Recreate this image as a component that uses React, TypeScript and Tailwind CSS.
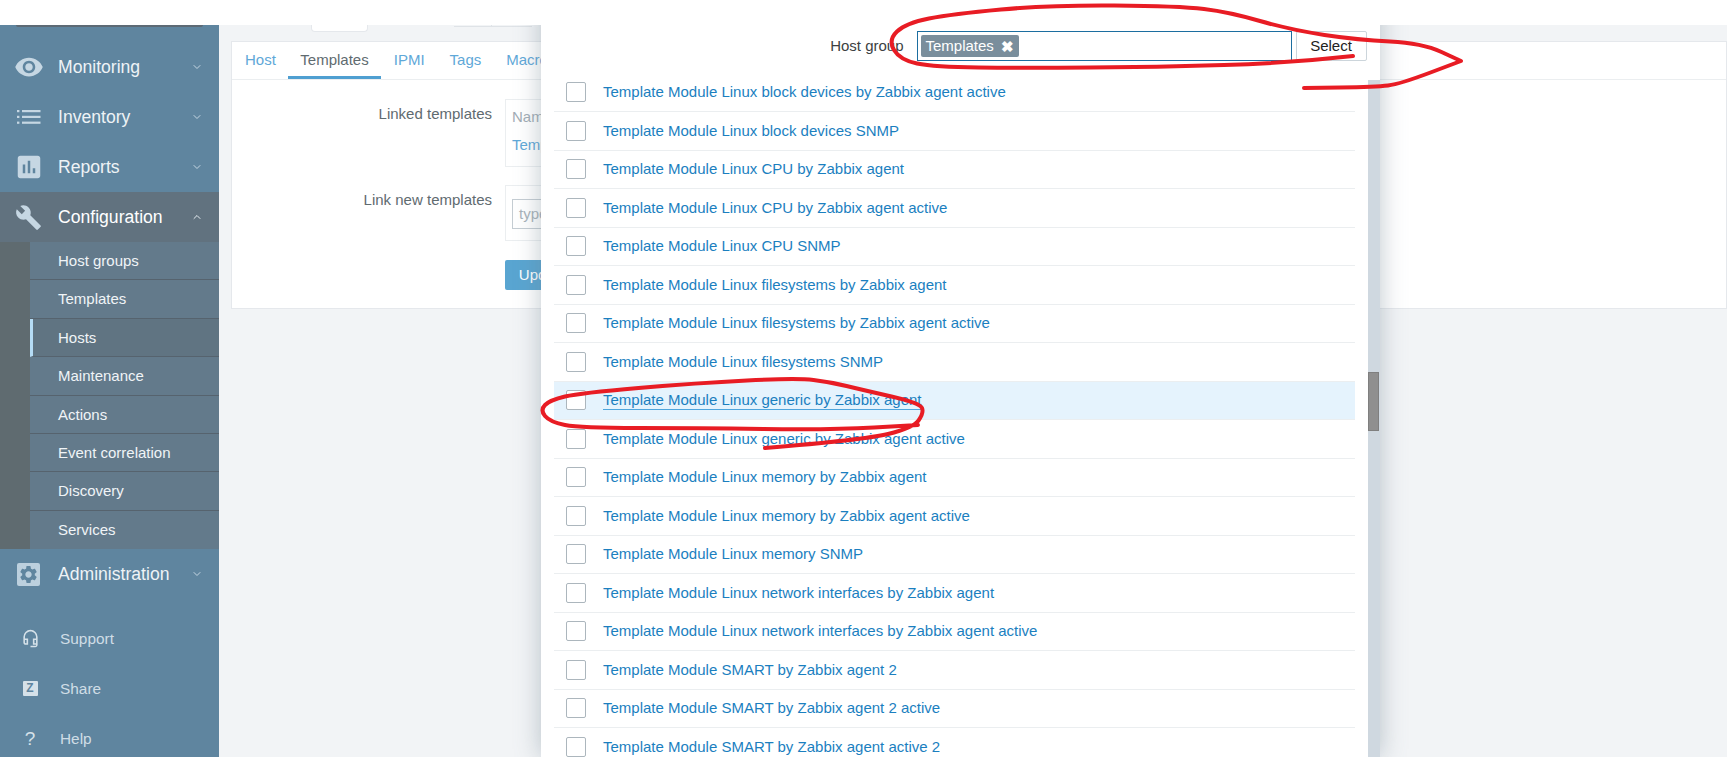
import React from "react";
import { ChevronDown, ChevronUp } from "lucide-react";
import { MdVisibility, MdAssessment, MdBuild, MdSettings, MdOutlineHeadsetMic } from "react-icons/md";

const subItems = ["Host groups", "Templates", "Hosts", "Maintenance", "Actions", "Event correlation", "Discovery", "Services"];
const rows = [
  "Linux block devices by Zabbix agent active",
  "Linux block devices SNMP",
  "Linux CPU by Zabbix agent",
  "Linux CPU by Zabbix agent active",
  "Linux CPU SNMP",
  "Linux filesystems by Zabbix agent",
  "Linux filesystems by Zabbix agent active",
  "Linux filesystems SNMP",
  "Linux generic by Zabbix agent",
  "Linux generic by Zabbix agent active",
  "Linux memory by Zabbix agent",
  "Linux memory by Zabbix agent active",
  "Linux memory SNMP",
  "Linux network interfaces by Zabbix agent",
  "Linux network interfaces by Zabbix agent active",
  "SMART by Zabbix agent 2",
  "SMART by Zabbix agent 2 active",
  "SMART by Zabbix agent active 2",
];

function smooth(p: number[][]) {
  let d = `M${p[0][0]} ${p[0][1]}`;
  for (let i = 1; i < p.length - 1; i++) {
    const mx = (p[i][0] + p[i + 1][0]) / 2;
    const my = (p[i][1] + p[i + 1][1]) / 2;
    d += ` Q${p[i][0]} ${p[i][1]} ${mx} ${my}`;
  }
  const l = p[p.length - 1];
  return d + ` L${l[0]} ${l[1]}`;
}

const ovalTop = [[1353, 56], [1291, 63], [1157, 67], [1023, 68], [934, 67], [900, 60], [888, 40], [906, 23], [952, 14], [1050, 5], [1179, 6], [1229, 12], [1291, 30], [1358, 40], [1422, 43], [1461, 61], [1461, 61], [1400, 84], [1376, 87], [1304, 88]];
const ovalRow = [[765, 448], [863, 440], [913, 428], [924, 413], [920, 403], [863, 390], [830, 382], [797, 378], [697, 383], [580, 393], [550, 400], [540, 410], [550, 422], [580, 428], [697, 428], [830, 430], [918, 425]];

function NavItem({ icon, label, open, active }: { icon: React.ReactNode; label: string; open?: boolean; active?: boolean }) {
  return (
    <div className={`flex h-[50px] shrink-0 items-center pr-[16px] text-[17.6px] ${active ? "bg-[#61727f] text-white" : "text-[#eef3f6]"}`}>
      <div className="flex w-[58px] shrink-0 items-center justify-center pr-[1px] text-[#c6d7e3]">{icon}</div>
      <span className="flex-1">{label}</span>
      {open ? <ChevronUp size={12} strokeWidth={2} className="text-[#e6edf2]" /> : <ChevronDown size={12} strokeWidth={2} className="text-[#c6d7e3]" />}
    </div>
  );
}

function FootItem({ icon, label }: { icon: React.ReactNode; label: string }) {
  return (
    <div className="flex h-[50px] shrink-0 items-center text-[15.4px] text-[#cfdde6]">
      <div className="flex w-[60px] shrink-0 items-center justify-center">{icon}</div>
      <span>{label}</span>
    </div>
  );
}

export default function App() {
  return (
    <div className="relative flex h-[757px] w-[1727px] flex-col overflow-hidden bg-white font-['Liberation_Sans',Arial,sans-serif]">
      <div className="relative z-20 h-[25px] shrink-0 bg-white" />
      <div className="flex min-h-0 flex-1">
        <aside className="flex w-[219px] shrink-0 flex-col overflow-hidden bg-[#5f859f]">
          <div className="mx-[16px] h-[2px] shrink-0 rounded-b-sm bg-[#5d6a75]" />
          <div className="h-[15px] shrink-0" />
          <NavItem icon={<MdVisibility size={30} />} label="Monitoring" />
          <NavItem
            icon={
              <svg width="24" height="16" viewBox="0 0 24 16" fill="currentColor">
                <rect x="0" y="1" width="2.4" height="2.2" />
                <rect x="0" y="6.8" width="2.4" height="2.2" />
                <rect x="0" y="12.6" width="2.4" height="2.2" />
                <rect x="5" y="1" width="18.5" height="2.2" />
                <rect x="5" y="6.8" width="18.5" height="2.2" />
                <rect x="5" y="12.6" width="18.5" height="2.2" />
              </svg>
            }
            label="Inventory"
          />
          <NavItem icon={<MdAssessment size={30} />} label="Reports" />
          <NavItem icon={<MdBuild size={27} />} label="Configuration" open active />
          <div className="shrink-0 bg-[#5f6b70] pl-[30px]">
            {subItems.map((s) => (
              <div
                key={s}
                className={`flex h-[38.4px] items-center border-b border-[#56636e] pt-[1px] text-[15px] text-[#f0f4f7] last:border-b-0 ${
                  s === "Hosts" ? "border-l-[3px] border-l-[#b5dcf5] bg-[#607482] pl-[25px]" : "bg-[#637a8b] pl-[28px]"
                }`}
              >
                {s}
              </div>
            ))}
          </div>
          <NavItem
            icon={
              <div className="flex h-[23px] w-[23px] items-center justify-center rounded-[2px] bg-[#bcd0de] text-[#5f859f]">
                <MdSettings size={21} />
              </div>
            }
            label="Administration"
          />
          <div className="h-[14px] shrink-0" />
          <FootItem icon={<MdOutlineHeadsetMic size={19} className="text-[#d5e1e9]" />} label="Support" />
          <FootItem
            icon={
              <div className="flex h-[15px] w-[15px] items-center justify-center rounded-[1px] bg-[#d5e1e9] text-[12px] font-bold leading-none text-[#5f859f]">
                Z
              </div>
            }
            label="Share"
          />
          <FootItem icon={<span className="text-[19px] leading-none text-[#d5e1e9]">?</span>} label="Help" />
        </aside>

        <main className="min-w-0 flex-1 bg-[#f2f4f6]">
          <div className="flex h-[16px] items-start pl-[92px]">
            <div className="h-[7px] w-[57px] rounded-b-sm border border-t-0 border-[#e5e8ec] bg-white" />
            <div className="ml-[86px] h-[2px] w-[38px] border-b border-r border-[#dfe3e7]" />
            <div className="h-[2px] w-[40px] border-b border-[#dfe3e7]" />
          </div>
          <div className="ml-[12px] h-[268px] border border-[#e5e8ec] bg-white">
            <div className="flex h-[38px] border-b border-[#ebeef0] text-[15px] text-[#5fa8d8]">
              <div className="flex items-center pl-[13px] pr-[12px]">Host</div>
              <div className="flex items-center border-b-[3px] border-[#4f9fd1] px-[12.5px] pt-[3px] text-[#5f6b70]">Templates</div>
              <div className="flex items-center px-[12.5px]">IPMI</div>
              <div className="flex items-center px-[12.5px]">Tags</div>
              <div className="flex items-center px-[12.5px]">Macros</div>
            </div>
            <div className="pt-[19px] text-[15px]">
              <div className="flex gap-[13px]">
                <div className="w-[260px] pt-[4px] text-right text-[#5f6b70]">Linked templates</div>
                <div className="h-[68px] w-[600px] border border-[#ebeef0] pl-[6px] pt-[6px]">
                  <div className="text-[#a2adb5]">Name</div>
                  <div className="mt-[5px] text-[#5fa8d8]">Template</div>
                </div>
              </div>
              <div className="mt-[18px] flex gap-[13px]">
                <div className="w-[260px] pt-[4px] text-right text-[#5f6b70]">Link new templates</div>
                <div className="h-[56px] w-[600px] border border-[#ebeef0] pl-[6px] pt-[13px]">
                  <div className="flex h-[30px] w-[300px] items-center border border-[#c5cdd3] pl-[6px] text-[#a9b3ba]">type here to search</div>
                </div>
              </div>
              <div className="ml-[273px] mt-[19px] flex h-[30px] w-[76px] items-center justify-center rounded-[2px] bg-[#59a5d1] text-white">
                Update
              </div>
            </div>
          </div>
        </main>
      </div>

      <div className="absolute bottom-0 left-[541px] top-0 z-10 flex w-[839px] bg-white shadow-[0_0_24px_rgba(110,130,145,0.45)]">
        <div className="min-w-0 flex-1 overflow-hidden pl-[13px] pr-[13px]">
          <div className="flex h-[73.5px] items-start pt-[31px]">
            <div className="flex h-[30px] w-[362.5px] shrink-0 items-center justify-end pr-[13px] pt-[1px] text-[15px] text-[#3c3f42]">Host group</div>
            <div className="flex h-[30px] w-[375px] shrink-0 items-center border border-[#1c6ea0] pl-[3px]">
              <div className="flex h-[22px] items-center gap-[7px] rounded-[2px] bg-[#7a8e9c] px-[5px] text-[15px] text-white">
                Templates
                <span className="text-[15px] font-bold leading-none">✖</span>
              </div>
            </div>
            <div className="ml-[4px] flex h-[30px] w-[71px] shrink-0 items-center justify-center rounded-[2px] border border-[#ccd5db] bg-white pt-[1px] text-[15px] text-[#222]">
              Select
            </div>
          </div>
          <div className="w-[801px]">
            {rows.map((r, i) => {
              const hl = i === 8;
              return (
                <div key={r} className={`flex h-[38.5px] items-center border-b border-[#ebeef0] pl-[12px] ${hl ? "bg-[#e5f3fd]" : ""}`}>
                  <div className="h-[20px] w-[20px] shrink-0 rounded-[2px] border border-[#acb6bd] bg-white" />
                  <span className={`ml-[17px] text-[15px] text-[#1b7fbf] ${hl ? "border-b border-[#4ea5dc] leading-[18px]" : ""}`}>
                    Template Module {r}
                  </span>
                </div>
              );
            })}
          </div>
        </div>
        <div className="mt-[80px] w-[12px] shrink-0 bg-[#cfd8e0]">
          <div className="mt-[292px] h-[59px] w-[11px] border border-[#7f7f7f] bg-[#8f8f8f]" />
        </div>
      </div>

      <svg className="pointer-events-none absolute left-0 top-0 z-30" width="1727" height="757" viewBox="0 0 1727 757" fill="none">
        <path d={smooth(ovalTop)} stroke="#e81c24" strokeWidth="4" strokeLinecap="round" strokeLinejoin="round" />
        <path d={smooth(ovalRow)} stroke="#e81c24" strokeWidth="4" strokeLinecap="round" strokeLinejoin="round" />
      </svg>
    </div>
  );
}
